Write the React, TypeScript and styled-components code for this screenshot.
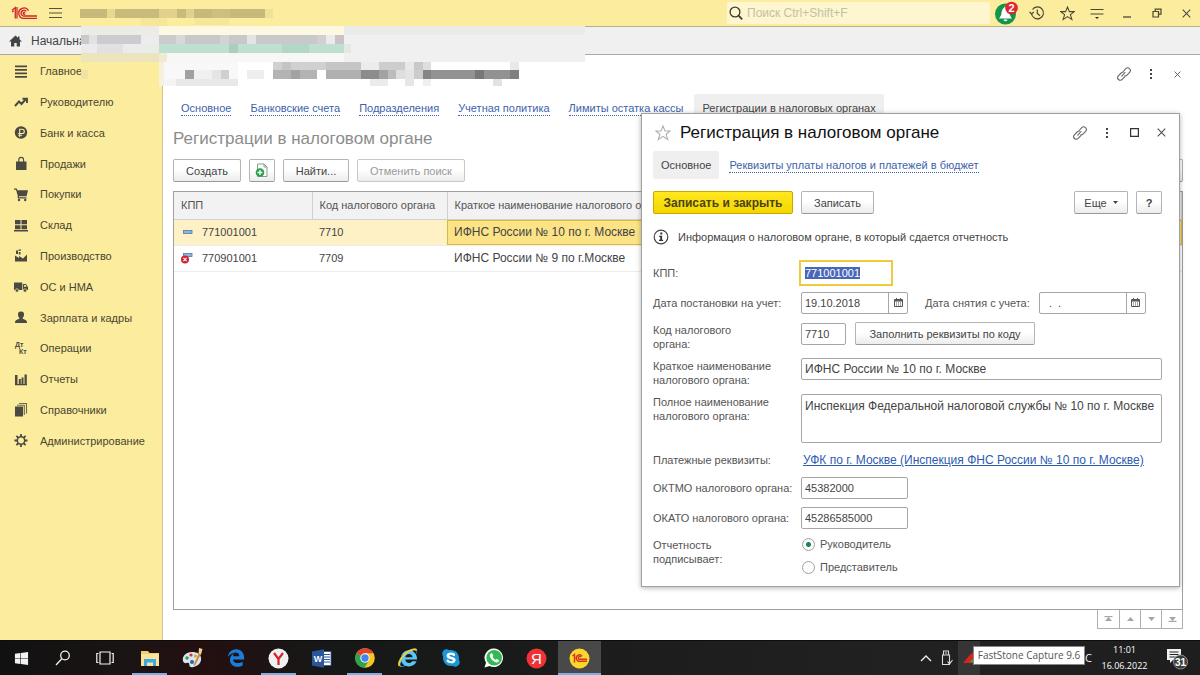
import React, { useEffect, useRef } from 'react';
import styled, { createGlobalStyle, css } from 'styled-components';
import { FaEdgeLegacy, FaInternetExplorer, FaSkype, FaWindows } from 'react-icons/fa';

const GlobalStyle = createGlobalStyle`
  *, *::before, *::after { box-sizing: border-box; }
  body { margin: 0; background: #fff; }
  body, button, input, textarea, table {
    font-family: "Liberation Sans", Arial, sans-serif;
    font-size: 11px;
    line-height: 14px;
    color: #444;
  }
  svg { display: block; flex: none; }
`;

const App1C = styled.div`
  position: relative;
  min-height: 100vh;
  display: flex;
  flex-direction: column;
  overflow: hidden;
`;

/* ---------- top bar ---------- */

const TopBar = styled.header`
  height: 27px;
  display: flex;
  align-items: center;
  background: #fbec9e;
  border-bottom: 1px solid #b9b083;
`;

const BrandArea = styled.div`
  flex: 1;
  display: flex;
  align-items: center;
  gap: 12px;
  padding-left: 11px;
`;

const PlainButton = styled.button<{ $w?: number }>`
  display: flex;
  align-items: center;
  justify-content: center;
  width: ${(p) => (p.$w ? `${p.$w}px` : 'auto')};
  padding: 0;
  border: 0;
  background: none;
`;

const SearchBox = styled.label`
  width: 263px;
  height: 22px;
  display: flex;
  align-items: center;
  gap: 4px;
  padding-left: 2px;
  background: #fdf6cf;
`;

const SearchInput = styled.input`
  flex: 1;
  min-width: 0;
  border: 0;
  padding: 0;
  background: none;
  outline: none;
  font-size: 12px;
  &::placeholder { color: #c4c0a6; opacity: 1; }
`;

const WindowTools = styled.div`
  display: flex;
  align-items: center;
  height: 26px;
`;

const HomeBar = styled.nav`
  height: 28px;
  display: flex;
  align-items: center;
  background: #f0f0f0;
  border-bottom: 1px solid #a9a9a9;
`;

const HomeTab = styled.a`
  display: flex;
  align-items: center;
  gap: 9px;
  padding-left: 9px;
  font-size: 12px;
  color: #444;
  text-decoration: none;
`;

/* ---------- sidebar ---------- */

const Body = styled.div`
  flex: 1;
  display: flex;
`;

const Sidebar = styled.nav`
  width: 163px;
  flex: none;
  padding-top: 1px;
  background: #fbec9e;
  border-right: 1px solid #cfc48c;
`;

const SideList = styled.ul`
  margin: 0;
  padding: 0;
  list-style: none;
  height: 400px;
  display: grid;
  grid-template-rows: repeat(13, 1fr);
`;

const SideLink = styled.a`
  height: 100%;
  display: flex;
  align-items: center;
  gap: 12px;
  padding-left: 14px;
  color: #4a4632;
  text-decoration: none;
`;

/* ---------- main ---------- */

const Main = styled.main`
  position: relative;
  flex: 1;
  min-width: 0;
  display: flex;
  flex-direction: column;
  padding: 0 17px 11px 10px;
  background: #fff;
`;

const FormHeader = styled.div`
  height: 38px;
  margin-right: -7px;
  display: flex;
  align-items: center;
  justify-content: flex-end;
`;

const SectionTabs = styled.nav`
  height: 30px;
  display: flex;
  align-items: center;
  gap: 19px;
  padding-left: 8px;
  white-space: nowrap;
`;

const DottedLink = styled.a`
  color: #3d62ad;
  text-decoration: none;
  border-bottom: 1px dotted #3d62ad;
`;

const CurrentTab = styled.span<{ $outset?: boolean }>`
  padding: 7px 8px;
  margin-left: ${(p) => (p.$outset ? '-8px' : '0')};
  border-radius: 2px;
  background: #efefef;
`;

const ListTitle = styled.h1`
  margin: 0;
  height: 36px;
  font-size: 17px;
  font-weight: 400;
  line-height: 32px;
  color: #8c8c8c;
`;

const CommandRow = styled.div<{ $gap?: number }>`
  display: flex;
  align-items: center;
  gap: ${(p) => p.$gap ?? 8}px;
`;

const Spacer = styled.span`
  flex: 1;
`;

const Button = styled.button<{ $w?: number; $primary?: boolean }>`
  height: 23px;
  display: flex;
  align-items: center;
  justify-content: center;
  gap: 6px;
  width: ${(p) => (p.$w ? `${p.$w}px` : 'auto')};
  padding: 0 10px;
  border: 1px solid #b4b4b4;
  border-bottom-color: #999;
  border-radius: 2px;
  background: linear-gradient(#fff 45%, #ececec);
  white-space: nowrap;
  &:disabled { color: #999; border-color: #c8c8c8; }
  ${(p) =>
    p.$primary &&
    css`
      border-color: #c7a800;
      background: linear-gradient(#ffe81f, #f3d600);
      font-size: 12px;
      font-weight: 700;
      color: #4b4316;
    `}
`;

const IconButton = styled(Button)`
  padding: 0;
`;

const TableFrame = styled.div`
  flex: 1;
  margin-top: 9px;
  border: 1px solid #a0a0a0;
`;

const DataTable = styled.table`
  width: 100%;
  border-collapse: collapse;
  table-layout: fixed;
  th, td {
    padding: 0 7px;
    text-align: left;
    font-weight: 400;
    white-space: nowrap;
    overflow: hidden;
  }
  th {
    height: 27px;
    background: #f2f2f2;
    border-right: 1px solid #d0d0d0;
    border-bottom: 1px solid #d0d0d0;
    color: #555;
  }
  td { height: 26px; border-bottom: 1px solid #ececec; }
  td:last-child { font-size: 12px; }
`;

const Row = styled.tr<{ $selected?: boolean }>`
  background: ${(p) => (p.$selected ? '#fdf1c5' : '#fff')};
  td:last-child {
    background: ${(p) => (p.$selected ? '#fbe386' : 'transparent')};
    box-shadow: ${(p) => (p.$selected ? 'inset 0 0 0 1px #dcb93a' : 'none')};
  }
`;

const RowMark = styled.span`
  display: flex;
  align-items: center;
  gap: 8px;
`;

const Pager = styled.div`
  align-self: flex-end;
  display: flex;
  border: 1px solid #b0b0b0;
  border-top: 0;
`;

const PagerButton = styled.button`
  width: 21px;
  height: 18px;
  display: flex;
  align-items: center;
  justify-content: center;
  padding: 0;
  border: 0;
  background: #fff;
  & + & { border-left: 1px solid #b0b0b0; }
`;

/* ---------- dialog window ---------- */

const Dialog = styled.section`
  position: absolute;
  top: 58px;
  left: 478px;
  right: 20px;
  padding: 0 17px 12px 11px;
  border: 1px solid #a0a0a0;
  background: #fff;
  box-shadow: 0 1px 5px rgba(0, 0, 0, 0.3);
`;

const DialogHeader = styled.header`
  height: 37px;
  display: flex;
  align-items: center;
  gap: 9px;
  margin-right: -9px;
  padding-left: 2px;
`;

const DialogTitle = styled.h2`
  flex: 1;
  margin: 0;
  font-size: 17px;
  font-weight: 400;
  line-height: 20px;
  color: #111;
`;

const DialogTabs = styled.nav`
  display: flex;
  align-items: center;
  gap: 10px;
  margin-bottom: 12px;
`;

const Info = styled.p`
  display: flex;
  align-items: center;
  gap: 9px;
  margin: 0 0 3px;
  height: 45px;
`;

const FormRows = styled.form`
  display: flex;
  flex-direction: column;
  gap: 8px;
`;

const FieldRow = styled.div`
  display: grid;
  grid-template-columns: 148px 1fr;
  align-items: start;
`;

const Label = styled.label<{ $lines?: number }>`
  padding-top: ${(p) => (p.$lines === 2 ? '1px' : '4px')};
  max-width: ${(p) => (p.$lines === 2 ? '136px' : 'none')};
  height: ${(p) => (p.$lines === 2 ? '28px' : '22px')};
  white-space: ${(p) => (p.$lines === 2 ? 'normal' : 'nowrap')};
  color: #555;
`;

const Inline = styled.div`
  display: flex;
  align-items: center;
  gap: 9px;
`;

const inputLook = css`
  border: 1px solid #a6a6a6;
  border-radius: 2px;
  background: #fff;
  padding: 0 3px;
  outline: none;
`;

const TextInput = styled.input<{ $w?: number; $active?: boolean }>`
  ${inputLook}
  width: ${(p) => (p.$w ? `${p.$w}px` : '100%')};
  height: 22px;
  font-size: ${(p) => (p.$w ? '11px' : '12px')};
  ${(p) =>
    p.$active &&
    css`
      border-color: #fff;
      border-radius: 0;
      outline: 2px solid #edcb3b;
    `}
  &::selection { background: #4967b9; color: #fff; }
`;

const TextArea = styled.textarea`
  ${inputLook}
  display: block;
  width: 100%;
  height: 49px;
  padding: 4px 3px;
  font-size: 12px;
  resize: none;
`;

const DateBox = styled.span`
  display: flex;
  width: 107px;
  height: 22px;
  border: 1px solid #a6a6a6;
  border-radius: 2px;
`;

const DateInput = styled.input`
  flex: 1;
  min-width: 0;
  border: 0;
  padding: 0 3px;
  background: none;
  outline: none;
`;

const DateButton = styled.button`
  width: 19px;
  display: flex;
  align-items: center;
  justify-content: center;
  padding: 0;
  border: 0;
  border-left: 1px solid #a6a6a6;
  background: none;
`;

const EndDateLabel = styled.label`
  margin-left: 8px;
  color: #555;
  white-space: nowrap;
`;

const PayLink = styled.a`
  padding: 2px;
  font-size: 12px;
  color: #2d5cb0;
  text-decoration: underline;
`;

const PayLabel = styled.span`
  padding: 2px 0;
  color: #555;
`;

const RadioStack = styled.div`
  display: flex;
  flex-direction: column;
  gap: 9px;
`;

const RadioLabel = styled.label`
  display: flex;
  align-items: center;
  gap: 5px;
  color: #555;
  input {
    appearance: none;
    width: 13px;
    height: 13px;
    margin: 0 0 0 1px;
    border: 1px solid #a0a0a0;
    border-radius: 50%;
    background: #fff;
  }
  input:checked { background: radial-gradient(circle, #16884e 0 2px, #fff 3px); }
`;

/* ---------- taskbar ---------- */

const Taskbar = styled.footer`
  height: 35px;
  flex: none;
  display: flex;
  background: linear-gradient(90deg, #111 0, #1b1414 130px, #240f10 200px, #161818 330px, #1b1c1b 600px, #202120 900px, #1d1e1d 100%);
  border-top: 1px solid #0c0c0c;
  color: #f2f2f2;
`;

const TaskButton = styled.button<{ $w: number; $running?: boolean; $active?: boolean; $gap?: boolean }>`
  width: ${(p) => p.$w}px;
  margin-left: ${(p) => (p.$gap ? '2px' : '0')};
  display: flex;
  align-items: center;
  justify-content: center;
  padding: 0;
  border: 0;
  color: #f2f2f2;
  background: ${(p) => (p.$active ? '#484948' : 'none')};
  position: relative;
  &::after {
    content: '';
    display: ${(p) => (p.$running ? 'block' : 'none')};
    position: absolute;
    bottom: 0;
    left: ${(p) => (p.$active ? '0' : '4px')};
    right: ${(p) => (p.$active ? '0' : '4px')};
    height: 2px;
    background: #7db0e0;
  }
`;

const Tray = styled.div`
  position: relative;
  display: flex;
  align-items: stretch;
`;

const TrayHover = styled.span`
  width: 22px;
  display: flex;
  align-items: center;
  justify-content: center;
  background: #343534;
`;

const Tooltip = styled.div`
  position: absolute;
  left: 57px;
  top: 5px;
  height: 19px;
  width: 112px;
  text-align: center;
  border: 1px solid #888;
  background: #fff;
  color: #555;
  font-family: "Open Sans", sans-serif;
  font-size: 10px;
  line-height: 17px;
  white-space: nowrap;
`;

const Lang = styled.span`
  width: 8px;
  margin-left: 105px;
  align-self: center;
  font-family: "Open Sans", sans-serif;
`;

const Clock = styled.time`
  width: 63px;
  align-self: center;
  text-align: center;
  font-family: "Open Sans", sans-serif;
  font-size: 9px;
  line-height: 16px;
  color: #fff;
`;

/* ---------- icons ---------- */

const Logo1C = () => (
  <svg width="26" height="14" viewBox="0 0 26 14" fill="none" stroke="#d2232a" strokeWidth="1.3">
    <path d="M1 4.2 4.3 1.6V12.5M1 6l2-1.2M6 12.5V1" />
    <path d="M17.5 4.6A5.2 5.2 0 1 0 13.4 12.4H26" />
    <path d="M15.3 5.4A2.9 2.9 0 1 0 13.4 10H26" />
    <path d="M14 6.6a1 1 0 1 0 .2 1" />
  </svg>
);

const Burger = () => (
  <svg width="13" height="12" viewBox="0 0 13 12" stroke="#55513a" strokeWidth="1.2">
    <path d="M0 1.5h13M0 6h13M0 10.5h13" />
  </svg>
);

const Magnifier = () => (
  <svg width="14" height="14" viewBox="0 0 14 14" fill="none" stroke="#3c3a2e" strokeWidth="1.3">
    <circle cx="6" cy="6" r="4.9" />
    <path d="m9.6 9.6 3.6 3.8" strokeWidth="1.7" />
  </svg>
);

const Bell = () => (
  <svg width="24" height="24" viewBox="0 0 24 24">
    <circle cx="11.5" cy="13" r="10.5" fill="#14954a" />
    <path d="M11.5 5.5c-1 0-1.3.6-1.3 1.3C8 8 7.7 10.5 7.4 12.7 7.1 14.8 6 16 5 17.5h13c-1-1.5-2.1-2.7-2.4-4.8-.3-2.2-.6-4.7-2.8-5.9 0-.7-.3-1.3-1.3-1.3zM9.5 18.500a2 1.700 0 0 0 4 0z" fill="#fff" />
    <circle cx="17.5" cy="7" r="6.300" fill="#e32330" />
    <text x="17.5" y="11" textAnchor="middle" fontSize="11" fontWeight="700" fill="#fff">2</text>
  </svg>
);

const HistoryIcon = () => (
  <svg width="16" height="16" viewBox="0 0 16 16" fill="none" stroke="#4b4733" strokeWidth="1.2">
    <path d="M2.500 8.500A6 6 0 1 0 3.500 4.500" />
    <path d="m.5 6.800 2 2.200L4.800 7" />
    <path d="M8.300 4.500V8.500l2.700 2.200" />
  </svg>
);

const Star = ({ color, size = 15 }: { color: string; size?: number }) => (
  <svg width={size} height={size} viewBox="0 0 16 16" fill="none" stroke={color} strokeWidth="1.1">
    <path d="m8 1 2 5h5.200l-4.100 3.300 1.600 5.200L8 11.400l-4.700 3.100 1.600-5.200L.8 6H6z" />
  </svg>
);

const SettingsLines = () => (
  <svg width="14" height="14" viewBox="0 0 14 14" stroke="#4b4733" strokeWidth="1.2">
    <path d="M.5 3.500h13M.5 8h13" />
    <path d="M5 11h4l-2 2z" fill="#2e2b1e" stroke="none" />
  </svg>
);

const MinimizeIcon = () => (
  <svg width="10" height="12" viewBox="0 0 10 12" stroke="#4b4733" strokeWidth="1.3"><path d="M1 10h8" /></svg>
);

const RestoreIcon = () => (
  <svg width="10" height="10" viewBox="0 0 10 10" fill="none" stroke="#4b4733" strokeWidth="1.2">
    <path d="M1 3.500h5.500V9H1zM3.200 3.300V1.200H9v5H6.700" />
  </svg>
);

const Cross = ({ size = 9, color = '#4b4b4b' }: { size?: number; color?: string }) => (
  <svg width={size} height={size} viewBox="0 0 10 10" stroke={color} strokeWidth="1.2"><path d="m.8.8 8.400 8.400M9.200.8.8 9.200" /></svg>
);

const LinkIcon = () => (
  <svg width="16" height="16" viewBox="0 0 16 16" fill="none" stroke="#666" strokeWidth="1.1" strokeLinecap="round">
    <path d="M5.800 10.200 9 6.500M7.200 5.500 9.800 2.700a2.600 2.600 0 0 1 3.800 3.600L10.900 9.100a2.500 2.500 0 0 1-2 .8" />
    <path d="M8.800 10.700 6.200 13.400a2.600 2.600 0 0 1-3.800-3.600L5.100 7a2.500 2.500 0 0 1 2-.8" />
  </svg>
);

const Dots = () => (
  <svg width="4" height="12" viewBox="0 0 4 12" fill="#444">
    <path d="M1 1h2v2H1zM1 5h2v2H1zM1 9h2v2H1z" />
  </svg>
);

const MaxIcon = () => (
  <svg width="9" height="9" viewBox="0 0 9 9" fill="none" stroke="#333" strokeWidth="1.2"><path d="M.6.6h7.800v7.800H.6z" /></svg>
);

const HomeIcon = () => (
  <svg width="13" height="12" viewBox="0 0 13 12" fill="#444">
    <path d="M6.500.5 0 6.500h2V11.500h3.300V8h2.400v3.500H11V6.500h2L10.500 4.200V1.500H9v1.300z" />
  </svg>
);

const CalendarIcon = () => (
  <svg width="9" height="10" viewBox="0 0 9 10" fill="none" stroke="#555">
    <path d="M.5 1.500h8v7h-8z" />
    <path d="M.5 2.800h8" strokeWidth="1.500" />
    <path d="M2.500 0v2M6.500 0v2" />
    <path d="M2 5h5M2 7h5" strokeDasharray="1 1" />
  </svg>
);

const CopyIcon = () => (
  <svg width="14" height="15" viewBox="0 0 14 15" fill="none">
    <path d="M2.500 1h6.500l3 3v9.500H2.500z" fill="#fff" stroke="#8b9a8e" />
    <path d="M9 1v3h3" stroke="#8b9a8e" />
    <circle cx="5" cy="9.500" r="4.300" fill="#27a04a" />
    <path d="M5 7v5M2.500 9.500h5" stroke="#fff" strokeWidth="1.300" />
  </svg>
);

const InfoIcon = () => (
  <svg width="16" height="16" viewBox="0 0 16 16">
    <circle cx="8" cy="8" r="6.800" fill="none" stroke="#444" strokeWidth="1.200" />
    <path d="M7.300 3.500h2v2h-2zM6.200 6.700h2.900v4h1v1.200H6v-1.200h1.200V7.900h-1z" fill="#333" />
  </svg>
);

const RecordIcon = ({ deleted }: { deleted?: boolean }) => (
  <svg width="13" height="12" viewBox="0 0 13 12">
    <rect x="2.500" y={deleted ? 1.5 : 4.5} width="8.500" height="3" fill="#8fb4d8" stroke="#4c7cab" strokeWidth=".8" />
    {deleted && (
      <g>
        <circle cx="4" cy="7.500" r="4" fill="#cf2430" />
        <path d="m2.400 5.900 3.200 3.200M5.600 5.900 2.400 9.100" stroke="#fff" strokeWidth="1.200" />
      </g>
    )}
  </svg>
);

const Triangle = ({ down, bar }: { down?: boolean; bar?: boolean }) => (
  <svg width="9" height="6" viewBox="0 0 9 6" fill="#a6a6a6">
    <g transform={down ? 'rotate(180 4.500 3)' : undefined}>
      <path d="m4.500 1 3.500 4H1z" />
      {bar && <path d="M.5 0h8v1.200h-8z" />}
    </g>
  </svg>
);

const sideIcons: Record<string, React.ReactNode> = {
  main: <path d="M1 1.500h12v1.700H1zM1 5h12v1.700H1zM1 8.500h12v1.700H1zM1 12h12v1.700H1z" />,
  trend: <path d="m1 11 4-4.500 2.500 2.500L11.500 4.500M8.500 3.700h4.500V8" fill="none" stroke="#4a4a42" strokeWidth="1.900" />,
  bank: (
    <g>
      <circle cx="7" cy="7.500" r="6.200" />
      <path d="M5.700 12V4.300h2.500a2 2 0 0 1 0 4.200H4.200M4.200 10.300h4" fill="none" stroke="#fbec9e" strokeWidth="1.100" />
    </g>
  ),
  bag: (
    <g>
      <path d="M2 5.500h10.500V14H2z" />
      <path d="M4.800 7V4a2.400 2.600 0 0 1 4.800 0v3" fill="none" stroke="#4a4a42" strokeWidth="1.100" />
    </g>
  ),
  cart: (
    <g>
      <path d="M0 1.500h2.800l.6 1.700H14l-1.400 6H5v1h7.500v1.300H3.700V8.500L2 2.700H0z" />
      <circle cx="5" cy="13" r="1.200" />
      <circle cx="11.200" cy="13" r="1.200" />
    </g>
  ),
  stock: <path d="M1 2h5.500v4.300H1zM7.500 2H13v4.300H7.500zM1 7.200h5.500v4H1zM7.500 7.200H13v4H7.500zM0 12h14v1.500H0z" />,
  factory: <path d="M1 13.500V7.500L5 10V8l4 2.500L13 6.500v7zM2 2.500h2V6H2zM4.500 1.500h2.500v1.300H4.500zM4.800 4h1.700v2.500H4.800z" />,
  truck: (
    <g>
      <path d="M0 3.500h8.300v7.500H0zM9 5h3l2 3v3H9z" />
      <circle cx="3" cy="11.500" r="1.700" stroke="#fbec9e" strokeWidth=".7" />
      <circle cx="11" cy="11.500" r="1.700" stroke="#fbec9e" strokeWidth=".7" />
      <path d="M10 6h1.700l1 1.800H10z" fill="#fbec9e" />
    </g>
  ),
  person: <path d="M7 1.500a3 3 0 0 1 3 3.200c0 1.500-.8 2.800-1.500 3.300 0 1 1 1.200 2.500 1.700 1.400.5 2 1.300 2 3.300H1c0-2 .6-2.800 2-3.300 1.500-.5 2.500-.7 2.500-1.700C4.800 7.500 4 6.200 4 4.700a3 3 0 0 1 3-3.200z" />,
  ops: (
    <g fontSize="7" fontWeight="700">
      <text x="1" y="6">Дт</text>
      <text x="5" y="13">Кт</text>
    </g>
  ),
  chart: <path d="M1 3h2.500v9H1zM4.800 7h2v5h-2zM7.500 5.500h2V12h-2zM10.500 2.500h2.300V12h-2.300zM1 12h12v1.300H1z" />,
  books: (
    <g>
      <path d="M1 4.500h8v10H1z" />
      <path d="M3 3.200h7.300V13M5 1.500h7.500v10" fill="none" stroke="#6d6a50" strokeWidth="1.100" />
    </g>
  ),
  gear: (
    <g fill="none" stroke="#4a4a42">
      <circle cx="7" cy="7.500" r="3.700" strokeWidth="1.500" />
      <path d="M7 1v2.500M7 11.500V14M.5 7.500H3M11 7.500h2.500M2.400 2.900l1.800 1.800M9.800 10.300l1.800 1.800M2.400 12.100l1.800-1.800M9.800 4.700l1.800-1.800" strokeWidth="1.800" />
    </g>
  ),
};

const sections: [string, string][] = [
  ['main', 'Главное'],
  ['trend', 'Руководителю'],
  ['bank', 'Банк и касса'],
  ['bag', 'Продажи'],
  ['cart', 'Покупки'],
  ['stock', 'Склад'],
  ['factory', 'Производство'],
  ['truck', 'ОС и НМА'],
  ['person', 'Зарплата и кадры'],
  ['ops', 'Операции'],
  ['chart', 'Отчеты'],
  ['books', 'Справочники'],
  ['gear', 'Администрирование'],
];

/* Pixelated patch that hides the company name: x, y, width, height, colour */
const mosaicCells: [number, number, number, number, string][] = [
  [80, 9, 27, 9, '#c6b97b'], [107, 9, 8, 9, '#e6d88f'], [115, 9, 44, 9, '#c8bb7c'], [159, 9, 18, 9, '#e0d28c'],
  [177, 9, 9, 9, '#c8bb7c'], [186, 9, 8, 9, '#e0d28c'], [194, 9, 71, 9, '#c6b97b'], [212, 9, 18, 9, '#cdbf80'],
  [265, 9, 8, 9, '#efe198'], [141, 18, 26, 8, '#f5e699'], [194, 18, 35, 7, '#f5e699'],
  [81, 26, 78, 9, '#ecebe6'], [159, 26, 185, 9, '#fcf8e2'], [344, 26, 241, 9, '#ebebe9'],
  [81, 35, 8, 9, '#c9c8cb'], [89, 35, 8, 9, '#e2e2e3'], [97, 35, 44, 9, '#cccbce'], [141, 35, 18, 9, '#ebeceb'],
  [159, 35, 17, 9, '#cbcacd'], [176, 35, 9, 9, '#d8d8da'], [185, 35, 62, 9, '#c8c7ca'], [220, 35, 9, 9, '#d3d3d5'],
  [247, 35, 9, 9, '#e3e4e4'], [256, 35, 61, 9, '#c9c8cb'], [317, 35, 9, 9, '#d3ced3'], [326, 35, 9, 9, '#ebebeb'],
  [335, 35, 9, 9, '#c9c3c9'],
  [344, 35, 241, 27, '#f0f0f0'],
  [81, 44, 60, 9, '#ebebeb'], [97, 44, 26, 9, '#e1e1e3'], [141, 44, 18, 9, '#e8edea'], [159, 44, 185, 9, '#bfdfcf'],
  [229, 44, 9, 9, '#a9cfbc'], [282, 44, 27, 9, '#b0d8c4'], [344, 44, 7, 9, '#e2e8e4'],
  [81, 53, 78, 9, '#ece4bd'], [159, 53, 8, 9, '#f1ead0'], [167, 53, 177, 9, '#f7f7f7'],
  [81, 70, 7, 9, '#f0e2a1'],
  [162, 62, 76, 17, '#f8f8f8'], [159, 62, 5, 24, '#f5f1dc'], [164, 79, 74, 7, '#f4f4f4'], [176, 79, 62, 7, '#e8e8e8'],
  [185, 70, 9, 9, '#a0a0a0'], [194, 70, 18, 9, '#f0f0f0'], [212, 70, 9, 9, '#e4e4e4'], [221, 70, 8, 9, '#cfcfcf'],
  [247, 70, 17, 9, '#eeeeee'], [273, 62, 88, 8, '#d0d0d0'], [282, 62, 9, 8, '#c4c4c4'], [326, 62, 35, 8, '#c5c5c5'],
  [361, 62, 18, 8, '#ececec'], [379, 62, 26, 8, '#cdcdcd'], [405, 62, 9, 8, '#e8e8e8'], [414, 62, 9, 8, '#c9c9c9'],
  [423, 62, 8, 8, '#dedede'], [510, 62, 9, 8, '#e8e8e8'],
  [273, 70, 44, 9, '#b3b3b3'], [291, 70, 9, 9, '#a2a2a2'], [326, 70, 35, 9, '#b0b0b0'], [361, 70, 18, 9, '#8b8c8c'],
  [379, 70, 9, 9, '#a2a2a2'], [388, 70, 8, 9, '#bcbcbc'], [396, 70, 9, 9, '#dedede'], [405, 70, 9, 9, '#e4e4e4'],
  [414, 70, 9, 9, '#cccccc'], [423, 70, 96, 9, '#929292'], [423, 70, 8, 9, '#858585'], [475, 70, 9, 9, '#777777'],
  [510, 70, 9, 9, '#7f7f7f'], [370, 79, 18, 7, '#ebebeb'], [405, 79, 9, 7, '#e6e6e6'], [423, 79, 8, 7, '#f0f0f0'],
  [493, 79, 9, 7, '#e2e2e2'],
];

const MosaicSvg = styled.svg`
  position: absolute;
  top: 0;
  left: 0;
  pointer-events: none;
`;

const Mosaic = () => (
  <MosaicSvg width="600" height="90" shapeRendering="crispEdges" aria-hidden="true">
    {mosaicCells.map(([x, y, w, h, fill], i) => (
      <rect key={i} x={x} y={y} width={w} height={h} fill={fill} />
    ))}
  </MosaicSvg>
);

/* ---------- taskbar icons ---------- */

const SearchTask = () => (
  <svg width="16" height="16" viewBox="0 0 16 16" fill="none" stroke="#f2f2f2" strokeWidth="1.300">
    <circle cx="10" cy="5.500" r="4.300" />
    <path d="M6.800 8.800 1 15" />
  </svg>
);

const TaskView = () => (
  <svg width="18" height="14" viewBox="0 0 18 14" fill="none" stroke="#f2f2f2" strokeWidth="1.200">
    <path d="M4 1h10v12H4zM2.500 2.500H.8v9h1.700M15.500 2.500h1.700v9h-1.700" />
  </svg>
);

const Explorer = () => (
  <svg width="20" height="17" viewBox="0 0 20 17">
    <path d="M1 1h7l1.500 2H19v13H1z" fill="#f3cf6b" />
    <path d="M1 4h18v12H1z" fill="#fbe49a" />
    <path d="M4 9h12v7h-3v-3.500H7V16H4z" fill="#3faadf" />
  </svg>
);

const Paint = () => (
  <svg width="21" height="21" viewBox="0 0 21 21">
    <path d="M10 4C4 4 .5 8 .8 12c.3 3 2.500 3.500 4.200 3 2-.6 2.500.6 2.300 2 0 2 2 2.500 4 2 5-1 8-4.500 7.800-8.500C19 6 15 4 10 4z" fill="#d9e4ec" />
    <circle cx="5" cy="10" r="1.700" fill="#3c9a46" />
    <circle cx="9" cy="7" r="1.600" fill="#d8322c" />
    <circle cx="13.500" cy="8" r="1.600" fill="#e9a524" />
    <circle cx="10" cy="14" r="2" fill="#2866a8" />
    <path d="M11.500 17 17 5l2 1-6 11.500z" fill="#c98a3d" />
    <path d="M16.500 5.500 17 0l3.500 1-1.500 5.500z" fill="#ecd59a" />
  </svg>
);

const RoundLetter = ({ bg, fg, letter }: { bg: string; fg: string; letter: string }) => (
  <svg width="21" height="21" viewBox="0 0 21 21">
    <circle cx="10.500" cy="10.500" r="10" fill={bg} />
    <text x="10.500" y="15.500" textAnchor="middle" fontSize="15" fill={fg}>{letter}</text>
  </svg>
);

const YandexBrowser = () => (
  <svg width="21" height="21" viewBox="0 0 21 21">
    <circle cx="10.500" cy="10.500" r="10" fill="#f1f1f1" />
    <path d="m6 5 4.500 6L15 5M10.500 10.500V17" fill="none" stroke="#d8232a" strokeWidth="2.200" />
  </svg>
);

const Word = () => (
  <svg width="20" height="19" viewBox="0 0 20 19">
    <path d="M10 2.500h9v14h-9z" fill="#fff" stroke="#2b579a" strokeWidth=".8" />
    <path d="M12 5.500h6M12 8h6M12 10.500h6M12 13h6" stroke="#2b579a" />
    <path d="m0 2.500 12-2.300v18.600L0 16.500z" fill="#2b579a" />
    <text x="6" y="13" textAnchor="middle" fontSize="9" fontWeight="700" fill="#fff">W</text>
  </svg>
);

const Chrome = () => (
  <svg width="20" height="20" viewBox="0 0 20 20">
    <circle cx="10" cy="10" r="9.800" fill="#f6c722" />
    <path d="M10 10 1.500 5A9.800 9.800 0 0 1 18.500 5.200H10z" fill="#e0432f" />
    <path d="M1.500 5A9.800 9.800 0 0 0 9.500 19.800L14 12.300 10 10z" fill="#30a350" />
    <circle cx="10" cy="10" r="4.700" fill="#fff" />
    <circle cx="10" cy="10" r="3.700" fill="#4384ec" />
  </svg>
);

const IE = () => (
  <svg width="20" height="20" viewBox="0 0 20 20">
    <FaInternetExplorer x="1" y="1" size={18} color="#5cc5f2" />
    <path d="M1.500 18C-.5 15 4 7 10 3.500 14 1 18 .5 18.500 2.500" fill="none" stroke="#f0cf3b" strokeWidth="1.800" />
  </svg>
);

const WhatsApp = () => (
  <svg width="20" height="20" viewBox="0 0 20 20">
    <path d="M10 .5a9.300 9.300 0 1 1-4.500 17.600L.5 19.500 2 14.700A9.300 9.300 0 0 1 10 .5z" fill="#fff" />
    <circle cx="10.200" cy="9.800" r="7.800" fill="#34b853" />
    <path d="M7 5.500c-2 1-1.300 4 1.200 6.500s5.300 3.300 6.500 1.500c.5-.9.200-1.400-.4-1.700l-1.500-.8c-.5-.2-.8.1-1.300.8-1.300-.4-2.600-1.700-3-3 .7-.5.9-.7.7-1.300L8.600 6c-.3-.7-.9-.8-1.600-.5z" fill="#fff" />
  </svg>
);

const Skype = () => (
  <svg width="20" height="20" viewBox="0 0 20 20">
    <circle cx="10" cy="10" r="6.500" fill="#fff" />
    <FaSkype x="0" y="0" size={20} color="#1b97d8" />
  </svg>
);

const OneC = () => (
  <svg width="21" height="21" viewBox="0 0 21 21">
    <circle cx="10.500" cy="10.500" r="10" fill="#fbd62b" />
    <path d="M3.500 8 5.500 6.500V14.500M13 8.200A3.200 3.200 0 1 0 11.500 13.200H18M11.800 9.200a1.400 1.400 0 1 0-.5 2H18" fill="none" stroke="#d2342a" strokeWidth="1.400" />
  </svg>
);

const tasks: { name: string; icon: React.ReactNode; w: number; gap?: boolean; running?: boolean; active?: boolean }[] = [
  { name: 'Пуск', icon: <FaWindows size={15} />, w: 42 },
  { name: 'Поиск', icon: <SearchTask />, w: 42 },
  { name: 'Представление задач', icon: <TaskView />, w: 42 },
  { name: 'Проводник', icon: <Explorer />, w: 43, gap: true, running: true },
  { name: 'Paint', icon: <Paint />, w: 43 },
  { name: 'Edge', icon: <FaEdgeLegacy size={18} color="#1a7fdb" />, w: 43 },
  { name: 'Яндекс.Браузер', icon: <YandexBrowser />, w: 43, running: true },
  { name: 'Word', icon: <Word />, w: 43 },
  { name: 'Chrome', icon: <Chrome />, w: 43, running: true },
  { name: 'Internet Explorer', icon: <IE />, w: 43 },
  { name: 'Skype', icon: <Skype />, w: 43 },
  { name: 'WhatsApp', icon: <WhatsApp />, w: 43 },
  { name: 'Яндекс', icon: <RoundLetter bg="#ee3338" fg="#fff" letter="Я" />, w: 43 },
  { name: '1С', icon: <OneC />, w: 43, running: true, active: true },
];

const Chevron = () => (
  <svg width="12" height="7" viewBox="0 0 12 7" fill="none" stroke="#eee" strokeWidth="1.400"><path d="m1 6 5-5 5 5" /></svg>
);

const Usb = () => (
  <svg width="12" height="16" viewBox="0 0 12 16" fill="none" stroke="#ddd" strokeWidth="1.100">
    <path d="M2.500 1h5v4h-5zM1.500 5h7v9.500h-7zM4 3h2M6.500 11.500l2 2.500 3-4" />
  </svg>
);

const FastStone = () => (
  <svg width="12" height="12" viewBox="0 0 12 12">
    <path d="M0 11C3 8 6 3 10 0v11z" fill="#d8241c" />
    <path d="M7 10c1-2 2-3 5-4v5z" fill="#3fa535" />
  </svg>
);

const Notifications = () => (
  <svg width="26" height="24" viewBox="0 0 26 24">
    <path d="M2 3h14v11H8l-3 3v-3H2z" fill="#f2f2f2" />
    <path d="M4.500 6h9M4.500 8.500h9M4.500 11h6" stroke="#222" />
    <circle cx="15.500" cy="16" r="7" fill="#3c3d3c" stroke="#8d8d8d" />
    <text x="15.500" y="19.500" textAnchor="middle" fontSize="10" fontWeight="700" fill="#fff">31</text>
  </svg>
);

export default function App() {
  const kppRef = useRef<HTMLInputElement>(null);

  useEffect(() => {
    kppRef.current?.focus();
    kppRef.current?.select();
  }, []);

  return (
    <App1C>
      <GlobalStyle />
      <TopBar>
        <BrandArea>
          <Logo1C />
          <PlainButton aria-label="Меню"><Burger /></PlainButton>
        </BrandArea>
        <SearchBox>
          <Magnifier />
          <SearchInput placeholder="Поиск Ctrl+Shift+F" aria-label="Поиск" />
        </SearchBox>
        <WindowTools>
          <PlainButton $w={32} aria-label="Уведомления"><Bell /></PlainButton>
          <PlainButton $w={30} aria-label="История"><HistoryIcon /></PlainButton>
          <PlainButton $w={30} aria-label="Избранное"><Star color="#4b4733" /></PlainButton>
          <PlainButton $w={30} aria-label="Настройки"><SettingsLines /></PlainButton>
          <PlainButton $w={30} aria-label="Свернуть"><MinimizeIcon /></PlainButton>
          <PlainButton $w={30} aria-label="Восстановить"><RestoreIcon /></PlainButton>
          <PlainButton $w={28} aria-label="Закрыть"><Cross /></PlainButton>
        </WindowTools>
      </TopBar>

      <HomeBar>
        <HomeTab href="#home"><HomeIcon />Начальна</HomeTab>
      </HomeBar>

      <Body>
        <Sidebar>
          <SideList>
            {sections.map(([id, title]) => (
              <li key={id}>
                <SideLink href={`#${id}`}>
                  <svg width="14" height="15" viewBox="0 0 14 15" fill="#4a4a42">{sideIcons[id]}</svg>
                  {title}
                </SideLink>
              </li>
            ))}
          </SideList>
        </Sidebar>

        <Main>
          <FormHeader>
            <PlainButton $w={28} aria-label="Ссылка"><LinkIcon /></PlainButton>
            <PlainButton $w={26} aria-label="Действия"><Dots /></PlainButton>
            <PlainButton $w={26} aria-label="Закрыть форму"><Cross size={7} /></PlainButton>
          </FormHeader>
          <SectionTabs>
            <DottedLink href="#org">Основное</DottedLink>
            <DottedLink href="#accounts">Банковские счета</DottedLink>
            <DottedLink href="#departments">Подразделения</DottedLink>
            <DottedLink href="#policy">Учетная политика</DottedLink>
            <DottedLink href="#limits">Лимиты остатка кассы</DottedLink>
            <CurrentTab $outset>Регистрации в налоговых органах</CurrentTab>
          </SectionTabs>
          <ListTitle>Регистрации в налоговом органе</ListTitle>
          <CommandRow>
            <Button $w={68}>Создать</Button>
            <IconButton $w={26} aria-label="Скопировать"><CopyIcon /></IconButton>
            <Button $w={66}>Найти...</Button>
            <Button $w={108} disabled>Отменить поиск</Button>
            <Spacer />
            <Button $w={26} aria-label="Справка" />
          </CommandRow>
          <TableFrame>
            <DataTable>
              <colgroup>
                <col style={{ width: 138 }} />
                <col style={{ width: 135 }} />
                <col />
              </colgroup>
              <thead>
                <tr>
                  <th>КПП</th>
                  <th>Код налогового органа</th>
                  <th>Краткое наименование налогового о</th>
                </tr>
              </thead>
              <tbody>
                <Row $selected>
                  <td><RowMark><RecordIcon />771001001</RowMark></td>
                  <td>7710</td>
                  <td>ИФНС России № 10 по г. Москве</td>
                </Row>
                <Row>
                  <td><RowMark><RecordIcon deleted />770901001</RowMark></td>
                  <td>7709</td>
                  <td>ИФНС России № 9 по г.Москве</td>
                </Row>
              </tbody>
            </DataTable>
          </TableFrame>
          <Pager>
            <PagerButton aria-label="В начало"><Triangle bar /></PagerButton>
            <PagerButton aria-label="Вверх"><Triangle /></PagerButton>
            <PagerButton aria-label="Вниз"><Triangle down /></PagerButton>
            <PagerButton aria-label="В конец"><Triangle down bar /></PagerButton>
          </Pager>

          <Dialog role="dialog" aria-labelledby="dialog-title">
            <DialogHeader>
              <Star color="#b0b0b0" size={16} />
              <DialogTitle id="dialog-title">Регистрация в налоговом органе</DialogTitle>
              <CommandRow $gap={7}>
                <PlainButton $w={20} aria-label="Ссылка"><LinkIcon /></PlainButton>
                <PlainButton $w={20} aria-label="Действия"><Dots /></PlainButton>
                <PlainButton $w={20} aria-label="Развернуть"><MaxIcon /></PlainButton>
                <PlainButton $w={20} aria-label="Закрыть окно"><Cross /></PlainButton>
              </CommandRow>
            </DialogHeader>
            <DialogTabs>
              <CurrentTab>Основное</CurrentTab>
              <DottedLink href="#requisites">Реквизиты уплаты налогов и платежей в бюджет</DottedLink>
            </DialogTabs>
            <CommandRow>
              <Button $w={140} $primary>Записать и закрыть</Button>
              <Button $w={73}>Записать</Button>
              <Spacer />
              <Button $w={54}>
                Еще
                <svg width="5" height="3" viewBox="0 0 5 3" fill="#444"><path d="M0 0h5L2.500 3z" /></svg>
              </Button>
              <Button $w={26} aria-label="Справка"><b>?</b></Button>
            </CommandRow>
            <Info><InfoIcon />Информация о налоговом органе, в который сдается отчетность</Info>

            <FormRows>
              <FieldRow>
                <Label htmlFor="kpp">КПП:</Label>
                <TextInput id="kpp" ref={kppRef} $w={90} $active defaultValue="771001001" />
              </FieldRow>
              <FieldRow>
                <Label htmlFor="reg-date">Дата постановки на учет:</Label>
                <Inline>
                  <DateBox>
                    <DateInput id="reg-date" defaultValue="19.10.2018" />
                    <DateButton type="button" aria-label="Выбрать дату"><CalendarIcon /></DateButton>
                  </DateBox>
                  <EndDateLabel htmlFor="end-date">Дата снятия с учета:</EndDateLabel>
                  <DateBox>
                    <DateInput id="end-date" defaultValue="  .  ." />
                    <DateButton type="button" aria-label="Выбрать дату снятия"><CalendarIcon /></DateButton>
                  </DateBox>
                </Inline>
              </FieldRow>
              <FieldRow>
                <Label htmlFor="code" $lines={2}>Код налогового<br />органа:</Label>
                <Inline>
                  <TextInput id="code" $w={45} defaultValue="7710" />
                  <Button type="button" $w={180}>Заполнить реквизиты по коду</Button>
                </Inline>
              </FieldRow>
              <FieldRow>
                <Label htmlFor="short-name" $lines={2}>Краткое наименование налогового органа:</Label>
                <TextInput id="short-name" defaultValue="ИФНС России № 10 по г. Москве" />
              </FieldRow>
              <FieldRow>
                <Label htmlFor="full-name" $lines={2}>Полное наименование налогового органа:</Label>
                <TextArea id="full-name" defaultValue="Инспекция Федеральной налоговой службы № 10 по г. Москве" />
              </FieldRow>
              <FieldRow>
                <PayLabel>Платежные реквизиты:</PayLabel>
                <PayLink href="#payment">УФК по г. Москве (Инспекция ФНС России № 10 по г. Москве)</PayLink>
              </FieldRow>
              <FieldRow>
                <Label htmlFor="oktmo">ОКТМО налогового органа:</Label>
                <TextInput id="oktmo" $w={107} defaultValue="45382000" />
              </FieldRow>
              <FieldRow>
                <Label htmlFor="okato">ОКАТО налогового органа:</Label>
                <TextInput id="okato" $w={107} defaultValue="45286585000" />
              </FieldRow>
              <FieldRow role="radiogroup" aria-labelledby="signer">
                <Label as="span" id="signer" $lines={2}>Отчетность<br />подписывает:</Label>
                <RadioStack>
                  <RadioLabel><input type="radio" name="signer" defaultChecked />Руководитель</RadioLabel>
                  <RadioLabel><input type="radio" name="signer" />Представитель</RadioLabel>
                </RadioStack>
              </FieldRow>
            </FormRows>
          </Dialog>
        </Main>
      </Body>

      <Taskbar>
        {tasks.map((t) => (
          <TaskButton key={t.name} aria-label={t.name} $w={t.w} $gap={t.gap} $running={t.running} $active={t.active}>
            {t.icon}
          </TaskButton>
        ))}
        <Spacer />
        <Tray>
          <PlainButton $w={20} aria-label="Скрытые значки"><Chevron /></PlainButton>
          <PlainButton $w={22} aria-label="Извлечь устройство"><Usb /></PlainButton>
          <TrayHover><FastStone /></TrayHover>
          <Lang>С</Lang>
          <Tooltip role="tooltip">FastStone Capture 9.6</Tooltip>
          <Clock>11:01<br />16.06.2022</Clock>
          <PlainButton $w={44} aria-label="Уведомления Windows"><Notifications /></PlainButton>
        </Tray>
      </Taskbar>
      <Mosaic />
    </App1C>
  );
}
